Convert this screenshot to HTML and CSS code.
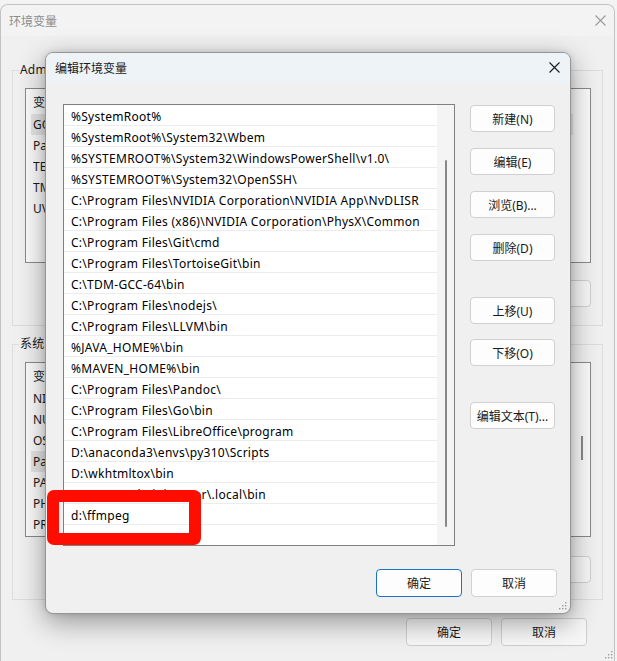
FILE: index.html
```html
<!DOCTYPE html>
<html lang="zh-CN">
<head>
<meta charset="utf-8">
<title>编辑环境变量</title>
<link rel="stylesheet" href="styles.css">
</head>
<body>
<div class="bgwin">
  <div class="bg-title">
    <span>环境变量</span>
    <svg class="x-icon" width="11" height="11" viewBox="0 0 11 11"><path d="M0.5 0.5L10.5 10.5M10.5 0.5L0.5 10.5" stroke="#9a9a9a" stroke-width="1.1" fill="none"/></svg>
  </div>
  <div class="bg-body">
    <fieldset class="group g1">
      <legend>Administrator 的用户变量(U)</legend>
      <div class="vlist">
        <div class="vcol">
          <div class="vhead"><span class="c1">变量</span><span>值</span></div>
          <div class="vrow sel"><span class="c1">GOPATH</span><span>C:\Users\Administrator\go</span></div>
          <div class="vrow"><span class="c1">Path</span><span>C:\Users\Administrator\AppData\Local\Microsoft\WindowsApps</span></div>
          <div class="vrow"><span class="c1">TEMP</span><span>C:\Users\Administrator\AppData\Local\Temp</span></div>
          <div class="vrow"><span class="c1">TMP</span><span>C:\Users\Administrator\AppData\Local\Temp</span></div>
          <div class="vrow"><span class="c1">UV_INDEX_URL</span><span>https://pypi.tuna.tsinghua.edu.cn/simple</span></div>
        </div>
      </div>
      <div class="btnrow">
        <button class="bgbtn">新建(N)...</button>
        <button class="bgbtn">编辑(E)...</button>
        <button class="bgbtn">删除(D)</button>
      </div>
    </fieldset>
    <fieldset class="group g2">
      <legend>系统变量(S)</legend>
      <div class="vlist">
        <div class="vcol">
          <div class="vhead"><span class="c1">变量</span><span>值</span></div>
          <div class="vrow"><span class="c1">NIEXTCCOMPILERSUPP</span><span>C:\Program Files\</span></div>
          <div class="vrow"><span class="c1">NUMBER_OF_PROCESSORS</span><span>16</span></div>
          <div class="vrow"><span class="c1">OS</span><span>Windows_NT</span></div>
          <div class="vrow sel"><span class="c1">Path</span><span>%SystemRoot%;%SystemRoot%\System32\Wbem</span></div>
          <div class="vrow"><span class="c1">PATHEXT</span><span>.COM;.EXE;.BAT;.CMD;.VBS;.VBE;.JS</span></div>
          <div class="vrow"><span class="c1">PHP_HOME</span><span>D:\php</span></div>
          <div class="vrow"><span class="c1">PROCESSOR_ARCHITECTURE</span><span>AMD64</span></div>
        </div>
        <div class="vtrack"><div class="vthumb"></div></div>
      </div>
      <div class="btnrow">
        <button class="bgbtn">新建(W)...</button>
        <button class="bgbtn">编辑(I)...</button>
        <button class="bgbtn">删除(L)</button>
      </div>
    </fieldset>
    <div class="bg-foot">
      <button class="bgbtn">确定</button>
      <button class="bgbtn">取消</button>
    </div>
  </div>
</div>

<div class="dialog">
  <div class="dlg-title">
    <span>编辑环境变量</span>
    <svg class="x-icon" width="11" height="11" viewBox="0 0 11 11"><path d="M0.5 0.5L10.5 10.5M10.5 0.5L0.5 10.5" stroke="#1a1a1a" stroke-width="1.1" fill="none"/></svg>
  </div>
  <div class="dlg-body">
    <div class="dlg-main">
      <div class="plist">
        <div class="rows">
          <div class="row">%SystemRoot%</div>
          <div class="row">%SystemRoot%\System32\Wbem</div>
          <div class="row">%SYSTEMROOT%\System32\WindowsPowerShell\v1.0\</div>
          <div class="row">%SYSTEMROOT%\System32\OpenSSH\</div>
          <div class="row">C:\Program Files\NVIDIA Corporation\NVIDIA App\NvDLISR</div>
          <div class="row">C:\Program Files (x86)\NVIDIA Corporation\PhysX\Common</div>
          <div class="row">C:\Program Files\Git\cmd</div>
          <div class="row">C:\Program Files\TortoiseGit\bin</div>
          <div class="row">C:\TDM-GCC-64\bin</div>
          <div class="row">C:\Program Files\nodejs\</div>
          <div class="row">C:\Program Files\LLVM\bin</div>
          <div class="row">%JAVA_HOME%\bin</div>
          <div class="row">%MAVEN_HOME%\bin</div>
          <div class="row">C:\Program Files\Pandoc\</div>
          <div class="row">C:\Program Files\Go\bin</div>
          <div class="row">C:\Program Files\LibreOffice\program</div>
          <div class="row">D:\anaconda3\envs\py310\Scripts</div>
          <div class="row">D:\wkhtmltox\bin</div>
          <div class="row">C:\Users\Administrator\.local\bin</div>
          <div class="row">d:\ffmpeg</div>
          <div class="row"></div>
        </div>
        <div class="ptrack"><div class="pthumb"></div></div>
      </div>
      <div class="side">
        <button class="btn">新建(N)</button>
        <button class="btn">编辑(E)</button>
        <button class="btn">浏览(B)...</button>
        <button class="btn">删除(D)</button>
        <button class="btn sp">上移(U)</button>
        <button class="btn">下移(O)</button>
        <button class="btn sp">编辑文本(T)...</button>
      </div>
    </div>
    <div class="dlg-foot">
      <button class="btn primary">确定</button>
      <button class="btn">取消</button>
    </div>
  </div>
  <svg class="grip" width="9" height="9" viewBox="0 0 9 9" fill="#9a9a9a"><rect x="7" y="1" width="1.4" height="1.4"/><rect x="4" y="4" width="1.4" height="1.4"/><rect x="7" y="4" width="1.4" height="1.4"/><rect x="1" y="7" width="1.4" height="1.4"/><rect x="4" y="7" width="1.4" height="1.4"/><rect x="7" y="7" width="1.4" height="1.4"/></svg>
</div>

<div class="redbox"></div>
<svg class="grip bg-grip" width="9" height="9" viewBox="0 0 9 9" fill="#a0a0a0"><rect x="7" y="1" width="1.4" height="1.4"/><rect x="4" y="4" width="1.4" height="1.4"/><rect x="7" y="4" width="1.4" height="1.4"/><rect x="1" y="7" width="1.4" height="1.4"/><rect x="4" y="7" width="1.4" height="1.4"/><rect x="7" y="7" width="1.4" height="1.4"/></svg>
</body>
</html>
```

FILE: styles.css
```css
* { box-sizing: border-box; }

body {
  margin: 0;
  width: 617px;
  height: 661px;
  overflow: hidden;
  position: relative;
  background: #f3f3f3;
  font-family: "Noto Sans", "Noto Sans CJK SC", sans-serif;
  font-size: 12px;
  color: #1a1a1a;
}

button {
  font-family: inherit;
  font-size: 12px;
  color: #1a1a1a;
  padding: 0;
  cursor: default;
}

/* ---------- background window ---------- */
.bgwin {
  margin-top: 4px;
  width: 615px;
  height: 680px;
  border: 1px solid #c2c2c2;
  border-bottom: none;
  border-radius: 8px 8px 0 0;
  background: #f0f0f0;
  overflow: hidden;
}

.bg-title {
  height: 31px;
  display: flex;
  align-items: center;
  justify-content: space-between;
  padding: 0 8px 0 8px;
  color: #8c8c8c;
  background: #f3f3f3;
}

.bg-body {
  padding-left: 11px;
}

.group {
  margin: 25px 0 0 0;
  width: 591px;
  border: 1px solid #dcdcdc;
  padding: 9px 11px 18px 12px;
  min-width: 0;
}
.g2 { margin-top: 9px; padding-bottom: 16px; }
.g2 .btnrow { margin-top: 19px; }

.group legend {
  padding: 0 1px;
  margin-left: -6px;
  line-height: 18px;
  height: 18px;
  color: #1a1a1a;
  letter-spacing: 0.2px;
}

.vlist {
  height: 175px;
  border: 1px solid #8a8a8a;
  background: #fbfbfb;
  display: flex;
  overflow: hidden;
}
.vcol { flex: 1; min-width: 0; }
.vhead {
  height: 25px;
  display: flex;
  align-items: center;
  padding-left: 7px;
}
.vrow {
  height: 21px;
  display: flex;
  align-items: center;
  margin: 0 17px 0 5px;
  padding-left: 2px;
  white-space: nowrap;
  overflow: hidden;
}
.vrow.sel { background: #e6e6e6; }
.c1 { width: 170px; flex: none; overflow: hidden; }
.vtrack {
  width: 17px;
  display: flex;
  justify-content: center;
}
.vthumb {
  width: 2px;
  height: 24px;
  margin-top: 73px;
  background: #8a8a8a;
}

.btnrow {
  margin-top: 17px;
  display: flex;
  justify-content: flex-end;
  gap: 9px;
}

.bgbtn {
  width: 86px;
  height: 27px;
  border: 1px solid #cfcfcf;
  border-radius: 4px;
  background: #f7f7f7;
}

.bg-foot {
  width: 591px;
  margin-top: 18px;
  padding-right: 16px;
  display: flex;
  justify-content: flex-end;
  gap: 9px;
}
.bg-foot .bgbtn { height: 28px; }

/* ---------- dialog ---------- */
.dialog {
  position: absolute;
  left: 45px;
  top: 52px;
  width: 526px;
  height: 562px;
  border: 1px solid #959595;
  border-radius: 8px;
  background: #f0f0f0;
  box-shadow: 0 8px 28px rgba(0, 0, 0, 0.38), 0 0 6px rgba(0, 0, 0, 0.12);
  overflow: hidden;
}

.dlg-title {
  height: 30px;
  display: flex;
  align-items: center;
  justify-content: space-between;
  padding: 0 10px 1px 9px;
  background: #eef3f8;
  color: #1a1a1a;
}

.dlg-body {
  padding: 21px 13px 0 17px;
}

.dlg-main {
  display: flex;
  gap: 15px;
}

.plist {
  width: 392px;
  height: 442px;
  border: 1px solid #7f7f7f;
  background: #fff;
  display: flex;
  overflow: hidden;
  flex: none;
}
.rows { width: 373px; flex: none; }
.row {
  height: 21px;
  line-height: 19px;
  padding-top: 2px;
  border-bottom: 1px solid #ececec;
  padding-left: 7px;
  white-space: nowrap;
  overflow: hidden;
  color: #000;
  letter-spacing: 0.28px;
}
.ptrack {
  width: 17px;
  background: #f4f4f4;
  display: flex;
  justify-content: center;
}
.pthumb {
  width: 2px;
  height: 367px;
  margin-top: 55px;
  background: #888;
  border-radius: 1px;
}

.side {
  display: flex;
  flex-direction: column;
  gap: 16px;
  padding-top: 1px;
  width: 85px;
}
.side .sp { margin-top: 20px; }
.side .btn:nth-child(6) { margin-top: -1px; }

.btn {
  width: 85px;
  height: 27px;
  border: 1px solid #d0d0d0;
  border-radius: 4px;
  background: #fdfdfd;
  white-space: nowrap;
}

.dlg-foot {
  margin-top: 23px;
  display: flex;
  justify-content: flex-end;
  gap: 9px;
}
.dlg-foot .btn { width: 86px; height: 28px; }
.btn.primary { border-color: #1a73c8; }

.grip {
  position: absolute;
  right: 3px;
  bottom: 3px;
}
.bg-grip { right: 4px; bottom: 2px; }

/* annotation overlay */
.redbox {
  position: absolute;
  left: 47px;
  top: 490px;
  width: 154px;
  height: 55px;
  border: 12px solid #ff0d00;
  border-radius: 7px;
}
```
